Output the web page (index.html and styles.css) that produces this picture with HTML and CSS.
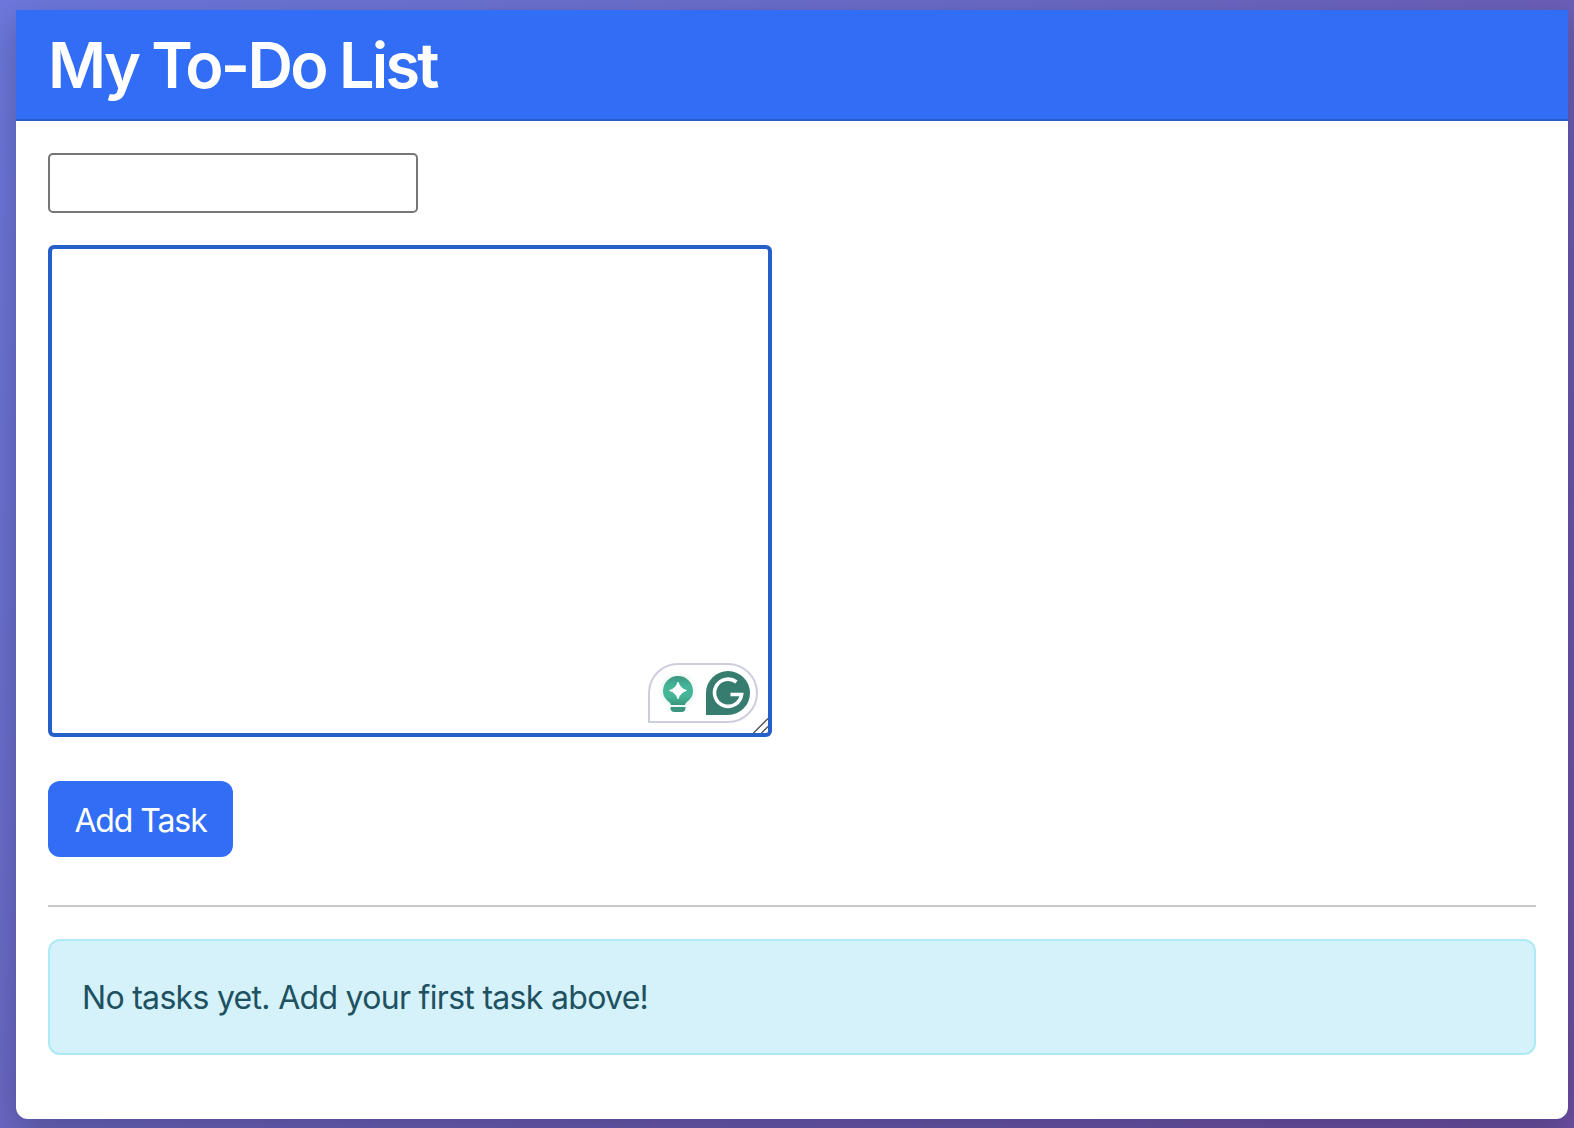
FILE: index.html
```html
<!DOCTYPE html>
<html lang="en">
<head>
<meta charset="utf-8">
<title>My To-Do List</title>
<link rel="stylesheet" href="styles.css">
</head>
<body>
<main class="card">
  <header class="card-header"><h1 class="title">My To-Do List</h1></header>
  <div class="card-body">
    <form class="task-form">
      <input class="task-name" type="text" aria-label="Task">
      <div class="editor">
        <textarea class="task-details" aria-label="Details"></textarea>
        <svg class="assistant" width="110" height="60" viewBox="0 0 110 60" aria-hidden="true">
          <defs>
            <radialGradient id="glow"><stop offset=".6" stop-color="#45b598" stop-opacity=".15"/><stop offset="1" stop-color="#45b598" stop-opacity="0"/></radialGradient>
            <linearGradient id="bulb" x1="0" y1="0" x2="0" y2="1"><stop offset="0" stop-color="#3a967f"/><stop offset=".35" stop-color="#45b598"/><stop offset=".7" stop-color="#45b598"/><stop offset="1" stop-color="#3a967f"/></linearGradient>
          </defs>
          <path d="M1 59V30A29 29 0 0 1 30 1H80A29 29 0 0 1 80 59Z" fill="#fff" stroke="#cccedd" stroke-width="2"/>
          <circle cx="30" cy="28" r="20" fill="url(#glow)"/>
          <path d="M23 42C22.500 38 15 37 15 28A15 15 0 0 1 45 28C45 37 37.500 38 37 42Z" fill="url(#bulb)"/>
          <path d="M22.500 44H37.500V45Q37.500 49 33.500 49H26.500Q22.500 49 22.500 45Z" fill="#3a967f"/>
          <path d="M30 19Q32 25.500 38.500 27.500Q32 29.500 30 36Q28 29.500 21.500 27.500Q28 25.500 30 19Z" fill="#fff" stroke="#fff" stroke-width=".8"/>
          <path d="M58 52V30A22 22 0 1 1 80 52Z" fill="#367d70"/>
          <path d="M88.500 19A13.600 13.600 0 1 0 93.600 31.500H82.500" fill="none" stroke="#fff" stroke-width="3.600"/>
        </svg>
        <svg class="grip" width="15" height="15" viewBox="0 0 15 15" aria-hidden="true"><path d="M0.500 15L15 .5M8.500 15L15 8.500" stroke="#555" stroke-width="1.500"/></svg>
      </div>
      <button class="add-button" type="button">Add Task</button>
    </form>
    <hr class="divider">
    <div class="notice">No tasks yet. Add your first task above!</div>
  </div>
</main>
</body>
</html>
```
FILE: styles.css
```css
* { box-sizing: border-box; }
html { height: 100%; }
body {
  margin: 0;
  height: 1128px;
  padding: 10px 6px 9px 16px;
  overflow: hidden;
  background: linear-gradient(135deg, #6c78dc 0%, #6a6bc8 35%, #6b5bb4 65%, #6c50a4 100%);
  font-family: Inter, sans-serif;
}
.card {
  height: 1109px;
  background: #fff;
  border-radius: 0 0 12px 12px;
  box-shadow: 0 12px 36px rgba(0, 0, 0, .24);
}
.card-header {
  height: 111px;
  padding: 16px 32px 15px;
  background: #316df5;
  border-bottom: 2px solid #285bd0;
}
.title {
  margin: 0;
  color: #fff;
  font-size: 63px;
  font-weight: 570;
  line-height: 78px;
  letter-spacing: -2.75px;
}
.card-body { padding: 32px; }
.task-form { display: flex; flex-direction: column; align-items: flex-start; }
.task-name {
  width: 370px;
  height: 60px;
  border: 2px solid #767676;
  border-radius: 5px;
  background: #fff;
}
.editor { position: relative; width: 724px; height: 492px; margin-top: 32px; }
.task-details {
  display: block;
  width: 100%;
  height: 100%;
  border: 4px solid #255fc9;
  border-radius: 6px;
  background: #fff;
  resize: none;
  outline: none;
}
.assistant { position: absolute; right: 14px; bottom: 14px; }
.grip { position: absolute; right: 4px; bottom: 4px; }
.add-button {
  width: 185px;
  height: 76px;
  margin-top: 44px;
  padding: 2px 0 0;
  border: 0;
  border-radius: 12px;
  background: #316df5;
  color: #fff;
  font-family: inherit;
  font-size: 32px;
  font-weight: 420;
  letter-spacing: -1.1px;
}
.divider { height: 2px; margin: 48px 0 32px; border: 0; background: #c7c8ca; }
.notice {
  height: 116px;
  padding: 33px 32px 31px;
  border: 2px solid #aeeaf6;
  border-radius: 12px;
  background: #d5f2fb;
  color: #205161;
  font-size: 32px;
  line-height: 48px;
  letter-spacing: -.7px;
}
```
